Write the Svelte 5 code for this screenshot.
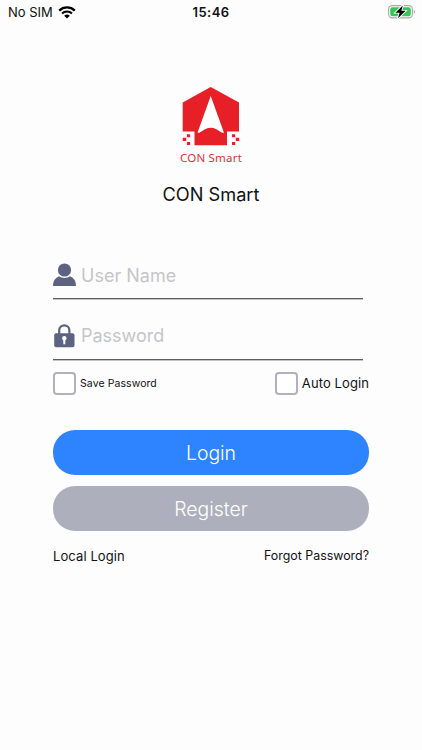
<script>
	let username = '';
	let password = '';
	let savePassword = false;
	let autoLogin = false;
</script>

<div class="screen">
	<header class="statusBar">
		<div class="carrier">
			<span>No SIM</span>
			<svg width="18" height="13" viewBox="0 0 18 13">
				<path d="M1.2 4.6a11.2 11.2 0 0 1 15.6 0" fill="none" stroke="#000" stroke-width="2.3" />
				<path d="M4 7.5a7.2 7.2 0 0 1 10 0" fill="none" stroke="#000" stroke-width="2.1" />
				<path d="M9 12.6 6.2 9.8a4 4 0 0 1 5.6 0z" />
			</svg>
		</div>
		<span class="time">15:46</span>
		<svg class="battery" width="28" height="14" viewBox="0 0 28 14">
			<rect x="0.6" y="0.6" width="23.8" height="12.3" rx="3.6" fill="#fff" stroke="#a9a9ab" stroke-width="1.1" />
			<rect x="2.2" y="2.2" width="20.6" height="9.1" rx="2.2" fill="#35c759" />
			<path d="M25.8 4.8c1.7.8 1.7 3.2 0 4z" fill="#a9a9ab" />
			<path d="M14.8.4 7.4 7.7h4.2L10 13.3l7.6-7.5h-4.3z" stroke="#fff" stroke-width="1.8" paint-order="stroke" />
		</svg>
	</header>

	<main class="content">
		<div class="brand">
			<svg width="58" height="60" viewBox="0 0 58 60">
				<path
					d="M28.7 0 57 15.6V44.5H45V58.3H12.5V44.5H.7V15.6z"
					fill="#e71f27"
				/>
				<path d="M28.7 9 15.5 45.8C20.5 45.8 21 41 28.7 40.7 36.4 41 37 45.8 42 45.8z" fill="#fff" />
				<g fill="#e71f27">
					<path d="M4.9 47.2h3.2v3H4.9zM.8 50.8h3.4v3.3H.8zM4.9 55h3.2v3H4.9z" />
					<path d="M50 47.2h3.2v3H50zM53.8 50.8h3.4v3.3h-3.4zM50 55h3.2v3H50z" />
				</g>
			</svg>
			<span class="logoText">CON Smart</span>
			<h1>CON Smart</h1>
		</div>

		<label class="field">
			<svg width="24" height="24" viewBox="0 0 24 24" fill="#5d6280">
				<circle cx="11.5" cy="7" r="6.6" />
				<path d="M0 23C0 17.8 2.4 14.7 6 13.2c3.3 2.3 7.7 2.3 11 0 3.7 1.5 6 4.6 6 9.8z" />
			</svg>
			<input type="text" placeholder="User Name" bind:value={username} />
		</label>
		<label class="field second">
			<svg width="24" height="24" viewBox="0 0 24 24">
				<path d="M6.2 10V6.5a5.1 5.1 0 0 1 10.2 0V10" fill="none" stroke="#5d6280" stroke-width="2.2" />
				<rect x="1.2" y="9.3" width="20.3" height="14" rx="2" fill="#5d6280" />
				<circle cx="11.3" cy="14.2" r="2.2" fill="#fff" />
				<path d="M10.3 15h2v5.3h-2z" fill="#fff" />
			</svg>
			<input type="password" placeholder="Password" bind:value={password} />
		</label>

		<div class="options">
			<label class="option save">
				<input type="checkbox" bind:checked={savePassword} />
				<span>Save Password</span>
			</label>
			<label class="option auto">
				<input type="checkbox" bind:checked={autoLogin} />
				<span>Auto Login</span>
			</label>
		</div>

		<button class="login">Login</button>
		<button class="register">Register</button>

		<div class="links">
			<a class="local" href="#local">Local Login</a>
			<a class="forgot" href="#forgot">Forgot Password?</a>
		</div>
	</main>
</div>

<style>
:global(body) {
	margin: 0;
	background: #fdfdfd;
}

.screen {
	height: 750px;
	overflow: hidden;
	background: #fdfdfd;
	color: #111;
	font-family: Inter, "Liberation Sans", sans-serif;
}

/* Status bar */
.statusBar {
	display: grid;
	grid-template-columns: 1fr auto 1fr;
	align-items: center;
	height: 24px;
	padding: 0 6px 0 8px;
	box-sizing: border-box;
	font-size: 13px;
}

.carrier {
	display: flex;
	align-items: center;
	gap: 5px;
}

.time {
	margin-right: 2px;
	font-weight: 600;
	letter-spacing: 0.45px;
}

.battery {
	justify-self: end;
}

/* Page content */
.content {
	width: 316px;
	margin-left: 53px;
}

.brand {
	display: flex;
	flex-direction: column;
	align-items: center;
	height: 226px;
	padding-top: 63px;
	box-sizing: border-box;
}

.logoText {
	margin-top: 3px;
	font-family: "Noto Sans", sans-serif;
	font-size: 11.5px;
	line-height: 16px;
	letter-spacing: 0.2px;
	color: #d8343b;
}

h1 {
	margin: 16px 0 0;
	font-size: 18.2px;
	line-height: 24px;
	font-weight: 400;
}

.field {
	display: flex;
	align-items: center;
	width: 310px;
	height: 49px;
	padding-top: 2px;
	box-sizing: border-box;
	border-bottom: 1px solid #5e5e5e;
	box-shadow: 0 1px #c4c4c4;
}

.second {
	margin-top: 12px;
	padding-top: 1px;
}

.field input {
	flex: 1;
	min-width: 0;
	margin-left: 4px;
	padding: 0;
	border: 0;
	outline: 0;
	background: none;
	font-family: inherit;
	font-size: 18px;
}

.field input::placeholder {
	color: #c5c5c8;
}

/* Checkboxes */
.options {
	display: flex;
	justify-content: space-between;
	margin-top: 11px;
}

.option {
	display: flex;
	align-items: center;
	height: 24px;
	gap: 4px;
}

.option input {
	appearance: none;
	width: 23px;
	height: 23px;
	margin: 0;
	box-sizing: border-box;
	border: 2px solid #b0b1bd;
	border-radius: 4px;
	background: #fff;
}

.option input:checked {
	background: #2e83ff;
}

.save {
	font-size: 10.5px;
	letter-spacing: 0.08px;
}

.auto {
	font-size: 13px;
	letter-spacing: 0.1px;
}

/* Buttons */
button {
	display: block;
	width: 316px;
	height: 44.5px;
	padding: 1px 0 0;
	border: 0;
	border-radius: 22px;
	color: #fff;
	font-family: inherit;
	font-size: 19.4px;
	font-weight: 300;
}

.login {
	margin-top: 35px;
	background: #2e83ff;
}

.register {
	margin-top: 11.5px;
	background: #adafbc;
}

.links {
	display: flex;
	justify-content: space-between;
	margin-top: 15.5px;
	font-size: 12.4px;
	line-height: 20px;
}

.links a {
	color: inherit;
	text-decoration: none;
}

.local {
	font-size: 13px;
	letter-spacing: 0.1px;
}
</style>
